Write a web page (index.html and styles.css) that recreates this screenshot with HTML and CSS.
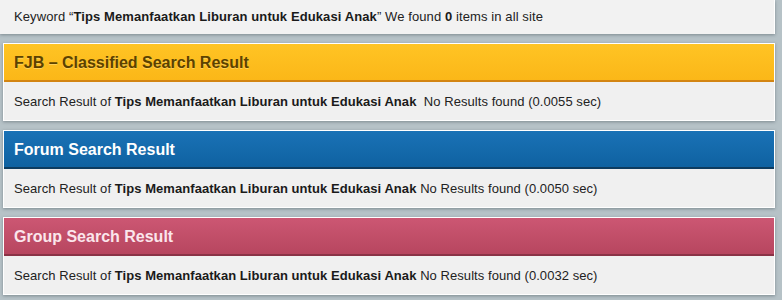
FILE: index.html
```html
<!DOCTYPE html>
<html>
<head>
<meta charset="utf-8">
<link rel="stylesheet" href="styles.css">
</head>
<body>
<div class="page">
  <div class="keyword-bar">Keyword “<b>Tips Memanfaatkan Liburan untuk Edukasi Anak</b>” We found <b>0</b> items in all site</div>
  <div class="results">
    <div class="box box-fjb">
      <div class="box-head">FJB – Classified Search Result</div>
      <div class="box-body">Search Result of <b>Tips Memanfaatkan Liburan untuk Edukasi Anak</b>&nbsp; No Results found (0.0055 sec)</div>
    </div>
    <div class="box box-forum">
      <div class="box-head">Forum Search Result</div>
      <div class="box-body">Search Result of <b>Tips Memanfaatkan Liburan untuk Edukasi Anak</b> No Results found (0.0050 sec)</div>
    </div>
    <div class="box box-group">
      <div class="box-head">Group Search Result</div>
      <div class="box-body">Search Result of <b>Tips Memanfaatkan Liburan untuk Edukasi Anak</b> No Results found (0.0032 sec)</div>
    </div>
  </div>
</div>
</body>
</html>
```
FILE: styles.css
```css
html, body {
  margin: 0;
  padding: 0;
}
body {
  background: #b6c2c7;
  font-family: "Liberation Sans", Arial, sans-serif;
  color: #222;
  width: 782px;
  height: 300px;
  overflow: hidden;
}
.page {
  display: flex;
  flex-direction: column;
  gap: 9px;
}
.keyword-bar {
  width: 775px;
  height: 34px;
  box-sizing: border-box;
  padding: 9px 0 0 14px;
  font-size: 13px;
  line-height: 16px;
  letter-spacing: 0.1px;
  background: #f2f2f2;
  box-shadow: 0 1px 3px rgba(60, 70, 80, 0.45);
  border-right: 1px solid #fff;
}
.keyword-bar b {
  color: #1a1a1a;
}
.results {
  display: flex;
  flex-direction: column;
  gap: 9px;
  padding-left: 3px;
}
.box {
  width: 772px;
  box-sizing: border-box;
  border: 1px solid #fff;
  background: #f0f0f0;
  box-shadow: 0 1px 3px rgba(60, 70, 80, 0.45);
}
.box-head {
  height: 38px;
  box-sizing: border-box;
  padding: 9px 0 0 10px;
  font-size: 16px;
  line-height: 19px;
  font-weight: bold;
  border-bottom: 2px solid;
}
.box-body {
  height: 38px;
  box-sizing: border-box;
  padding: 12px 0 0 10px;
  font-size: 13px;
  line-height: 16px;
  letter-spacing: 0.06px;
  color: #222;
}
.box-body b {
  color: #1a1a1a;
}
.box-fjb .box-head {
  background: linear-gradient(#ffc424, #fbb718);
  border-bottom-color: #d38512;
  color: #5c4200;
  text-shadow: 0 1px 0 rgba(255, 230, 150, 0.5);
}
.box-forum .box-head {
  background: linear-gradient(#1a72b6, #0f62a1);
  border-bottom-color: #0d3c60;
  color: #fff;
}
.box-group .box-head {
  background: linear-gradient(#cc5773, #b7465f);
  border-bottom-color: #8a3346;
  color: #fbe6ec;
}
```
